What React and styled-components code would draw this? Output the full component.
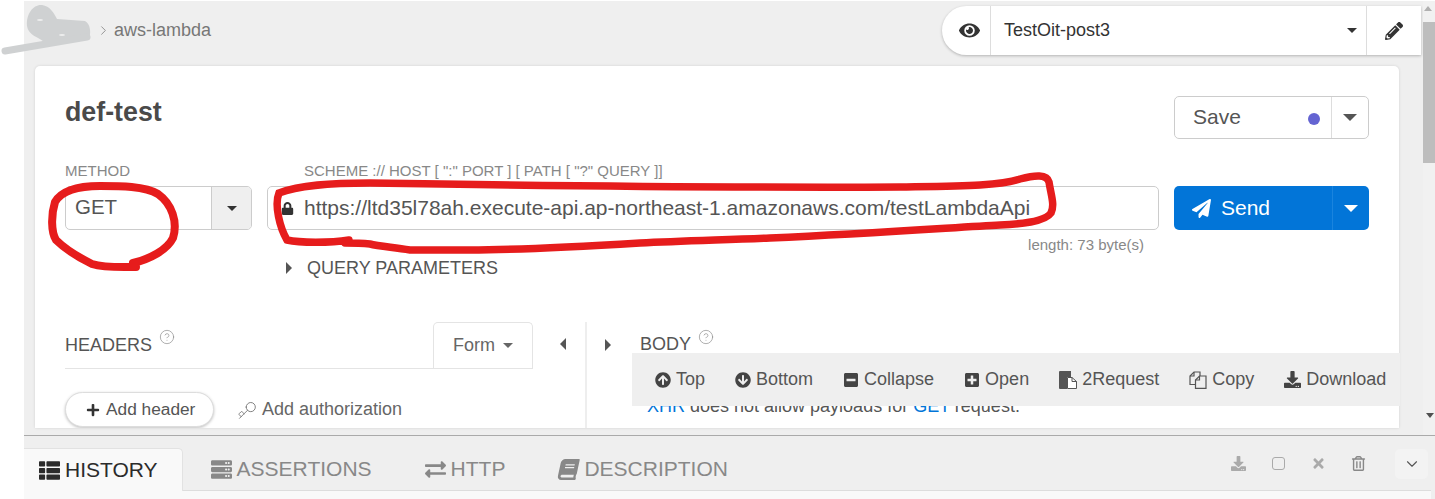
import React from 'react';
import styled, { createGlobalStyle } from 'styled-components';
import {
  FaEye, FaPencilAlt, FaLock, FaPaperPlane, FaPlus, FaArrowCircleUp, FaArrowCircleDown,
  FaMinusSquare, FaPlusSquare, FaDownload, FaThList, FaServer,
  FaExchangeAlt, FaBook, FaTimes, FaRegTrashAlt,
} from 'react-icons/fa';
import { ChevronRight, ChevronDown, CircleHelp, Key } from 'lucide-react';

const GlobalStyle = createGlobalStyle`
  html, body {
    margin: 0;
    background: #fff;
    font-family: "Liberation Sans", Arial, sans-serif;
  }
  * { box-sizing: border-box; }
`;

const Page = styled.div`
  position: relative;
  width: 1435px;
  height: 499px;
  padding: 1px 0 0 24px;
  overflow: hidden;
  display: flex;
  flex-direction: column;
`;

const Workspace = styled.div`
  display: flex;
  height: 434px;
  flex: none;
`;

const Main = styled.div`
  position: relative;
  flex: 1;
  min-width: 0;
  background: #efefef;
  padding: 0 2px 7px 11px;
  display: flex;
  flex-direction: column;
`;

const TopBar = styled.div`
  height: 65px;
  flex: none;
  display: flex;
  justify-content: space-between;
`;

const Breadcrumb = styled.div`
  display: flex;
  align-items: center;
  height: 58px;
  padding-left: 61px;
  gap: 3px;
  font-size: 18px;
  color: #777;
`;

const EnvPicker = styled.div`
  display: flex;
  align-items: stretch;
  width: 479px;
  height: 49px;
  margin-top: 5px;
  background: #fff;
  border-radius: 25px 0 0 25px;
  box-shadow: 0 1px 3px rgba(0, 0, 0, 0.25);
`;

const EnvEye = styled.div`
  width: 48px;
  display: flex;
  align-items: center;
  justify-content: center;
  padding-left: 6px;
  color: #333;
  font-size: 21px;
`;

const EnvSelect = styled.div`
  flex: 1;
  display: flex;
  align-items: center;
  justify-content: space-between;
  padding: 0 9px 0 13px;
  border-left: 1px solid #ddd;
  border-right: 1px solid #ddd;
  font-size: 18px;
  color: #333;
`;

const EnvEdit = styled.div`
  width: 54px;
  display: flex;
  align-items: center;
  justify-content: center;
  color: #333;
  font-size: 18px;
`;

const Caret = styled.span`
  display: inline-block;
  width: 0;
  height: 0;
  border-left: ${(p) => p.$size || 5.5}px solid transparent;
  border-right: ${(p) => p.$size || 5.5}px solid transparent;
  border-top: ${(p) => p.$size || 5.5}px solid ${(p) => p.$color || '#333'};
`;

const SideCaret = styled.span`
  display: inline-block;
  width: 0;
  height: 0;
  border-top: 6px solid transparent;
  border-bottom: 6px solid transparent;
  ${(p) => (p.$left ? 'border-right' : 'border-left')}: 6px solid #555;
`;

const Card = styled.div`
  position: relative;
  width: 1364px;
  flex: 1;
  min-height: 0;
  overflow: hidden;
  padding: 30px 30px 0;
  background: #fff;
  border-radius: 5px 5px 0 0;
  box-shadow: 0 0 3px rgba(0, 0, 0, 0.12);
`;

const TitleRow = styled.div`
  display: flex;
  justify-content: space-between;
  align-items: flex-start;
  height: 43px;
`;

const Title = styled.h1`
  margin: 0;
  font-size: 26.8px;
  line-height: 33px;
  font-weight: bold;
  color: #4a4a4a;
`;

const SplitButton = styled.div`
  display: flex;
  width: 195px;
  height: ${(p) => p.$height}px;
  border-radius: 5px;
  font-size: 21px;
  ${(p) => (p.$primary
    ? 'background: #0275d8; color: #fff;'
    : 'background: #fff; color: #555; border: 1px solid #ccc;')}
`;

const SplitMain = styled.div`
  flex: 1;
  display: flex;
  align-items: center;
  padding: 0 11px 0 18px;
  gap: 10px;
`;

const SaveLabel = styled.span`
  margin-top: -2px;
`;

const SplitCaret = styled.div`
  width: 37px;
  display: flex;
  align-items: center;
  justify-content: center;
  border-left: 1px solid ${(p) => p.$line};
`;

const SaveDot = styled.span`
  width: 12px;
  height: 12px;
  margin: 2px 0 0 auto;
  border-radius: 50%;
  background: #6464d2;
`;

const RequestGrid = styled.div`
  display: grid;
  grid-template-columns: 187px 892px 195px;
  column-gap: 15px;
  margin-top: 24px;
`;

const FieldLabel = styled.div`
  height: 16px;
  margin-bottom: 7px;
  padding-left: ${(p) => p.$indent || 0}px;
  font-size: 15px;
  line-height: 16px;
  color: #888;
`;

const MethodSelect = styled.div`
  display: flex;
  height: 44px;
  border: 1px solid #ccc;
  border-radius: 5px;
  font-size: 20.5px;
  color: #555;
`;

const MethodValue = styled.div`
  flex: 1;
  display: flex;
  align-items: center;
  padding-left: 9px;
  padding-bottom: 2px;
`;

const MethodCaret = styled.div`
  width: 40px;
  display: flex;
  align-items: center;
  justify-content: center;
  background: #efefef;
  border-left: 1px solid #ccc;
  border-radius: 0 4px 4px 0;
`;

const UrlInput = styled.div`
  display: flex;
  align-items: center;
  gap: 10px;
  height: 44px;
  padding-left: 13px;
  border: 1px solid #ccc;
  border-radius: 5px;
  font-size: 21px;
  color: #555;
  white-space: nowrap;
  svg { color: #333; font-size: 13px; }
`;

const LengthNote = styled.div`
  margin-top: 7px;
  padding-right: 15px;
  text-align: right;
  font-size: 15px;
  line-height: 16px;
  color: #888;
`;

const QueryToggle = styled.div`
  display: flex;
  align-items: center;
  gap: 15px;
  margin-top: 5px;
  padding-left: 19px;
  font-size: 18px;
  line-height: 20px;
  color: #555;
`;

const Panes = styled.div`
  display: grid;
  grid-template-columns: 468px 52px 1fr;
  margin-top: 44px;
  height: 110px;
`;

const PaneHeader = styled.div`
  display: flex;
  align-items: stretch;
  justify-content: space-between;
  height: 47px;
  border-bottom: 1px solid #e4e4e4;
`;

const PaneTitle = styled.div`
  display: flex;
  align-items: center;
  font-size: 18px;
  color: #555;
  margin-left: ${(p) => p.$offset || 0}px;
  svg { margin: -16px 0 0 7px; color: #888; }
`;

const FormTab = styled.div`
  width: 100px;
  display: flex;
  align-items: center;
  justify-content: center;
  gap: 8px;
  border: 1px solid #e4e4e4;
  border-bottom: none;
  border-radius: 5px 5px 0 0;
  font-size: 18px;
  color: #666;
`;

const PaneActions = styled.div`
  display: flex;
  align-items: center;
  gap: 23px;
  margin-top: 23px;
`;

const PillButton = styled.div`
  display: flex;
  align-items: center;
  gap: 6px;
  width: 149px;
  height: 35px;
  padding-left: 20px;
  background: #fff;
  border: 1px solid #ddd;
  border-radius: 18px;
  box-shadow: 0 1px 3px rgba(0, 0, 0, 0.25);
  font-size: 17.3px;
  color: #555;
  svg { color: #333; font-size: 14px; }
`;

const TextAction = styled.div`
  display: flex;
  align-items: center;
  gap: 5px;
  font-size: 18px;
  color: #666;
  svg { color: #777; transform: rotate(180deg); }
`;

const Gutter = styled.div`
  display: flex;
  justify-content: center;
  padding: 16px 0 0 7px;
`;

const RightPane = styled.div`
  border-left: 2px solid #eee;
  padding-left: 18px;
`;

const BodyHead = styled.div`
  display: flex;
  align-items: center;
  height: 45px;
`;

const BodyNote = styled.div`
  margin: 29px 0 0 42px;
  font-size: 18px;
  line-height: 20px;
  color: #555;
  white-space: nowrap;
`;

const NoteLink = styled.span`
  color: #0275d8;
`;

const ResultBar = styled.div`
  position: absolute;
  left: 608px;
  top: 352px;
  width: 768px;
  height: 53px;
  display: flex;
  align-items: center;
  gap: 30px;
  padding-left: 23px;
  background: #efefef;
`;

const ResultItem = styled.div`
  display: flex;
  align-items: center;
  gap: 5px;
  font-size: 18px;
  color: #555;
  white-space: nowrap;
  svg { color: #444; flex: none; }
`;

const ScrollTrack = styled.div`
  width: 12px;
  flex: none;
  position: relative;
  background: #f1f1f1;
`;

const ScrollThumb = styled.div`
  position: absolute;
  top: 21px;
  left: 0;
  width: 100%;
  height: 141px;
  background: #bdbdbd;
`;

const ScrollArrow = styled.span`
  position: absolute;
  left: ${(p) => (p.$up ? 1 : 3)}px;
  width: 0;
  height: 0;
  border-left: 4px solid transparent;
  border-right: 4px solid transparent;
  ${(p) => (p.$up
    ? 'top: 5px; border-bottom: 5px solid #b0b0b0;'
    : 'bottom: 17px; border-top: 5px solid #505050;')}
`;

const BottomPanel = styled.div`
  flex: 1;
  display: flex;
  flex-direction: column;
  border-top: 1px solid #aaa;
  background: #efefef;
  padding-top: 12px;
`;

const TabRow = styled.div`
  display: flex;
  align-items: stretch;
  height: 43px;
  flex: none;
  border-bottom: 1px solid #ddd;
  margin-right: 4px;
`;

const Tab = styled.div`
  display: flex;
  align-items: center;
  gap: 5px;
  padding: ${(p) => (p.$active ? '0 24px 0 15px' : '0 25px 0 28px')};
  margin-bottom: ${(p) => (p.$active ? '-1px' : '0')};
  font-size: 21px;
  color: ${(p) => (p.$active ? '#2b2b2b' : '#888')};
  background: ${(p) => (p.$active ? '#f9f9f9' : 'transparent')};
  border-radius: 0 5px 0 0;
  border: ${(p) => (p.$active ? '1px solid #e2e2e2' : 'none')};
  border-width: ${(p) => (p.$active ? '1px 1px 0 0' : '0')};
`;

const SlantedBook = styled(FaBook)`
  transform: skewX(-12deg);
`;

const PanelActions = styled.div`
  margin-left: auto;
  display: flex;
  align-items: flex-start;
  padding-top: 7px;
  color: #aaa;
  font-size: 15px;
`;

const PanelAction = styled.div`
  width: 40px;
  height: 16px;
  display: flex;
  align-items: center;
  justify-content: center;
  color: ${(p) => p.$color || 'inherit'};
`;

const SquareGlyph = styled.span`
  width: 13px;
  height: 13px;
  border: 1px solid #aaa;
  border-radius: 3px;
`;

const CollapseBox = styled.div`
  width: 33px;
  height: 30px;
  margin: -6px 3px 0 17px;
  display: flex;
  align-items: center;
  justify-content: center;
  background: #f3f3f3;
  border-radius: 5px;
  color: #555;
`;

const PanelFill = styled.div`
  flex: 1;
  background: #f9f9f9;
  margin-right: 4px;
`;

const Scribbles = styled.svg`
  position: absolute;
  left: 0;
  top: 0;
  width: 1435px;
  height: 499px;
  pointer-events: none;
`;

const ToRequestIcon = ({ size }) => (
  <svg width={size} height={size} viewBox="0 0 18 18">
    <path d="M1 0 H12 V6 H8 V18 H1 Q0 18 0 17 V1 Q0 0 1 0 Z" fill="#555" />
    <path d="M8.5 6.5 H13 L17.5 10.5 V17.5 H8.5 Z" fill="#fff" stroke="#555" />
    <path d="M13 6.5 V10.5 H17.5" fill="none" stroke="#555" />
  </svg>
);

const CopyIcon = ({ size }) => (
  <svg width={size} height={size} viewBox="0 0 18 18" fill="none" stroke="#555" strokeWidth="1.2">
    <path d="M6.5 13.5 H1 V5 L5 1 H11 V5" />
    <path d="M5 1 V5 H1" />
    <path d="M6.5 17.4 V9 L10.5 5 H17 V17.4 Z" />
    <path d="M10.5 5 V9 H6.5" />
  </svg>
);

const resultActions = [
  { Icon: FaArrowCircleUp, label: 'Top', size: 16 },
  { Icon: FaArrowCircleDown, label: 'Bottom', size: 16 },
  { Icon: FaMinusSquare, label: 'Collapse', size: 16 },
  { Icon: FaPlusSquare, label: 'Open', size: 16 },
  { Icon: ToRequestIcon, label: '2Request', size: 18 },
  { Icon: CopyIcon, label: 'Copy', size: 18 },
  { Icon: FaDownload, label: 'Download', size: 17 },
];

const tabs = [
  { Icon: FaThList, label: 'HISTORY', active: true },
  { Icon: FaServer, label: 'ASSERTIONS' },
  { Icon: FaExchangeAlt, label: 'HTTP' },
  { Icon: SlantedBook, label: 'DESCRIPTION' },
];

const App = () => (
  <Page>
    <GlobalStyle />
    <Workspace>
      <Main>
        <TopBar>
          <Breadcrumb>
            <ChevronRight size={15} strokeWidth={1.2} />
            aws-lambda
          </Breadcrumb>
          <EnvPicker>
            <EnvEye><FaEye /></EnvEye>
            <EnvSelect>
              TestOit-post3
              <Caret />
            </EnvSelect>
            <EnvEdit><FaPencilAlt /></EnvEdit>
          </EnvPicker>
        </TopBar>
        <Card>
          <TitleRow>
            <Title>def-test</Title>
            <SplitButton $height={43}>
              <SplitMain>
                <SaveLabel>Save</SaveLabel>
                <SaveDot />
              </SplitMain>
              <SplitCaret $line="#ddd"><Caret $size={7} $color="#555" /></SplitCaret>
            </SplitButton>
          </TitleRow>
          <RequestGrid>
            <div>
              <FieldLabel>METHOD</FieldLabel>
              <MethodSelect>
                <MethodValue>GET</MethodValue>
                <MethodCaret><Caret /></MethodCaret>
              </MethodSelect>
            </div>
            <div>
              <FieldLabel $indent={37}>SCHEME :// HOST [ ":" PORT ] [ PATH [ "?" QUERY ]]</FieldLabel>
              <UrlInput>
                <FaLock />
                https://ltd35l78ah.execute-api.ap-northeast-1.amazonaws.com/testLambdaApi
              </UrlInput>
              <LengthNote>length: 73 byte(s)</LengthNote>
              <QueryToggle>
                <SideCaret />
                QUERY PARAMETERS
              </QueryToggle>
            </div>
            <div>
              <FieldLabel>&nbsp;</FieldLabel>
              <SplitButton $primary $height={44}>
                <SplitMain>
                  <FaPaperPlane size={19} />
                  Send
                </SplitMain>
                <SplitCaret $line="#1a84de"><Caret $size={7} $color="#fff" /></SplitCaret>
              </SplitButton>
            </div>
          </RequestGrid>
          <Panes>
            <div>
              <PaneHeader>
                <PaneTitle>
                  HEADERS
                  <CircleHelp size={16} strokeWidth={1} />
                </PaneTitle>
                <FormTab>
                  Form
                  <Caret $color="#666" />
                </FormTab>
              </PaneHeader>
              <PaneActions>
                <PillButton><FaPlus />Add header</PillButton>
                <TextAction><Key size={20} strokeWidth={1.1} />Add authorization</TextAction>
              </PaneActions>
            </div>
            <Gutter><SideCaret $left /></Gutter>
            <RightPane>
              <BodyHead>
                <SideCaret />
                <PaneTitle $offset={29}>
                  BODY
                  <CircleHelp size={16} strokeWidth={1} />
                </PaneTitle>
              </BodyHead>
              <BodyNote>
                <NoteLink>XHR</NoteLink> does not allow payloads for <NoteLink>GET</NoteLink> request.
              </BodyNote>
            </RightPane>
          </Panes>
        </Card>
        <ResultBar>
          {resultActions.map(({ Icon, label, size }) => (
            <ResultItem key={label}><Icon size={size} />{label}</ResultItem>
          ))}
        </ResultBar>
      </Main>
      <ScrollTrack>
        <ScrollArrow $up />
        <ScrollThumb />
        <ScrollArrow />
      </ScrollTrack>
    </Workspace>
    <BottomPanel>
      <TabRow>
        {tabs.map(({ Icon, label, active }) => (
          <Tab key={label} $active={active}><Icon />{label}</Tab>
        ))}
        <PanelActions>
          <PanelAction><FaDownload /></PanelAction>
          <PanelAction><SquareGlyph /></PanelAction>
          <PanelAction><FaTimes /></PanelAction>
          <PanelAction $color="#888"><FaRegTrashAlt /></PanelAction>
          <CollapseBox><ChevronDown size={18} strokeWidth={1.5} /></CollapseBox>
        </PanelActions>
      </TabRow>
      <PanelFill />
    </BottomPanel>
    <Scribbles viewBox="0 0 1435 499">
      {/* grey scribble hiding the workspace name */}
      <path d="M27 26 C26 13 34 4 42 5 C50 6 54 13 57 19 L85 21 C91 24 91 35 89 37 L60 41 L46 43 C38 37 28 35 27 26 Z" fill="#cfd1d2" />
      <path d="M5 51 L87 37" stroke="#cfd1d2" strokeWidth="7" strokeLinecap="round" fill="none" />
      <ellipse cx="40" cy="20" rx="3" ry="1" fill="#eee" />
      <ellipse cx="62" cy="35" rx="3" ry="1" fill="#eee" />
      {/* red marker around method and url */}
      <path
        d="M133 263 C150 259 167 250 173 238 C178 222 172 204 158 194 C145 186 120 186 100 186 C80 186 62 190 55 202 C51 215 51 232 56 240 C66 250 80 258 92 264 C105 268 120 267 136 267"
        fill="none" stroke="#e61c1c" strokeWidth="8" strokeLinecap="round"
      />
      <path
        d="M349 240 C330 243 300 243 287 240 C280 228 274 205 279 193 C300 185 330 183 370 183 C500 185 700 188 900 187 C960 186 1000 186 1020 179 C1035 175 1047 174 1049 182 C1051 195 1055 205 1051 213 C1045 222 1020 224 1000 225 C960 227 880 233 770 238 C720 240 680 241 640 243 C590 246 520 250 470 250 C450 250 430 250 410 250 C390 247 378 246 370 244 C360 243 352 243 345 243"
        fill="none" stroke="#e61c1c" strokeWidth="7.5" strokeLinecap="round"
      />
    </Scribbles>
  </Page>
);

export default App;
